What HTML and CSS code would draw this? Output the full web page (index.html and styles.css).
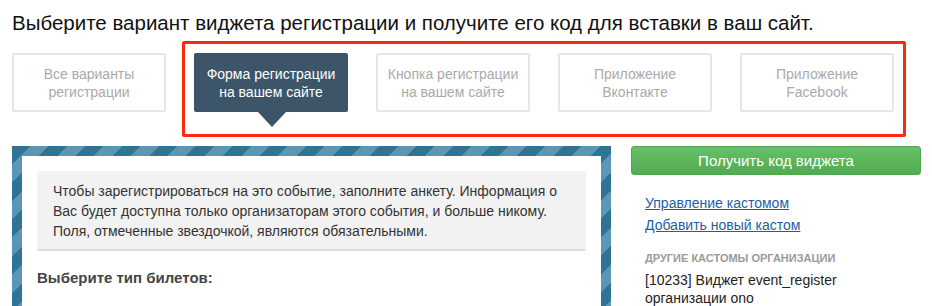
FILE: index.html
```html
<!DOCTYPE html>
<html lang="ru">
<head>
<meta charset="utf-8">
<title>Виджет регистрации</title>
<link rel="stylesheet" href="styles.css">
</head>
<body>
<div class="page">
  <h1 class="title">Выберите вариант виджета регистрации и получите его код для вставки в ваш сайт.</h1>
  <div class="tabs">
    <div class="tab">Все варианты<br>регистрации</div>
    <div class="tab tab-active">Форма регистрации<br>на вашем сайте</div>
    <div class="tab">Кнопка регистрации<br>на вашем сайте</div>
    <div class="tab">Приложение<br>Вконтакте</div>
    <div class="tab">Приложение<br>Facebook</div>
  </div>
  <div class="highlight"></div>
  <div class="main">
    <div class="panel">
      <div class="panel-inner">
        <div class="notice">Чтобы зарегистрироваться на это событие, заполните анкету. Информация о Вас будет доступна только организаторам этого события, и больше никому. Поля, отмеченные звездочкой, являются обязательными.</div>
        <div class="section-title">Выберите тип билетов:</div>
      </div>
    </div>
    <div class="side">
      <button class="get-code">Получить код виджета</button>
      <div class="links">
        <a href="#" class="link">Управление кастомом</a>
        <a href="#" class="link">Добавить новый кастом</a>
      </div>
      <div class="side-heading">ДРУГИЕ КАСТОМЫ ОРГАНИЗАЦИИ</div>
      <div class="custom-item">[10233] Виджет event_register организации оnо</div>
    </div>
  </div>
</div>
</body>
</html>
```

FILE: styles.css
```css
html, body {
  margin: 0;
  padding: 0;
  background: #fff;
  font-family: "Liberation Sans", Arial, sans-serif;
  overflow: hidden;
}
.page {
  position: relative;
  padding: 0 11px 0 12px;
}
.title {
  margin: 0;
  padding-top: 11px;
  font-size: 20.5px;
  font-weight: normal;
  line-height: 24px;
  color: #111;
}
.tabs {
  display: flex;
  gap: 28px;
  margin-top: 18px;
}
.tab {
  position: relative;
  box-sizing: border-box;
  width: 154px;
  height: 59px;
  border: 2px solid #e6e6e6;
  border-radius: 2px;
  display: flex;
  align-items: center;
  justify-content: center;
  text-align: center;
  font-size: 14px;
  line-height: 18px;
  color: #aaa;
}
.tab-active {
  background: #3d5569;
  border-color: #3d5569;
  color: #fff;
}
.tab-active::after {
  content: "";
  position: absolute;
  left: 62px;
  bottom: -17px;
  border-left: 14px solid transparent;
  border-right: 14px solid transparent;
  border-top: 15px solid #3d5569;
}
.highlight {
  position: absolute;
  left: 182px;
  top: 41px;
  width: 724px;
  height: 96px;
  box-sizing: border-box;
  border: 3px solid #fa2a0c;
  border-radius: 2px;
}
.main {
  display: flex;
  gap: 20px;
  margin-top: 34px;
}
.panel {
  width: 599px;
  box-sizing: border-box;
  padding: 10px 10px 0 10px;
  height: 180px;
  background: repeating-linear-gradient(135deg, #2f7397 0, #2f7397 13px, #5b96b8 13px, #5b96b8 26px);
}
.panel-inner {
  background: #fff;
  height: 100%;
  padding: 15px 15px 0 15px;
}
.notice {
  background: #f2f2f2;
  border-bottom: 2px solid #dedede;
  border-radius: 2px;
  padding: 10px 16px 8px 16px;
  font-size: 14px;
  line-height: 20px;
  color: #333;
}
.section-title {
  margin-top: 18px;
  font-size: 15px;
  font-weight: bold;
  color: #444;
}
.side {
  width: 290px;
}
.get-code {
  display: block;
  width: 100%;
  height: 29px;
  border: 1px solid #4fa84f;
  border-radius: 3px;
  background: linear-gradient(#65c165, #52ab52);
  color: #fff;
  font-family: "Liberation Sans", Arial, sans-serif;
  font-size: 15px;
  padding: 0;
}
.links {
  display: flex;
  flex-direction: column;
  gap: 4px;
  padding: 0 14px;
  margin-top: 19px;
}
.link {
  font-size: 14px;
  line-height: 18px;
  color: #1d5fa6;
  text-decoration: underline;
}
.side-heading {
  padding: 0 14px;
  margin-top: 17px;
  font-size: 11px;
  font-weight: bold;
  color: #9a9a9a;
  line-height: 14px;
}
.custom-item {
  padding: 0 14px;
  margin-top: 6px;
  font-size: 14px;
  line-height: 18px;
  color: #222;
  width: 200px;
}
```
